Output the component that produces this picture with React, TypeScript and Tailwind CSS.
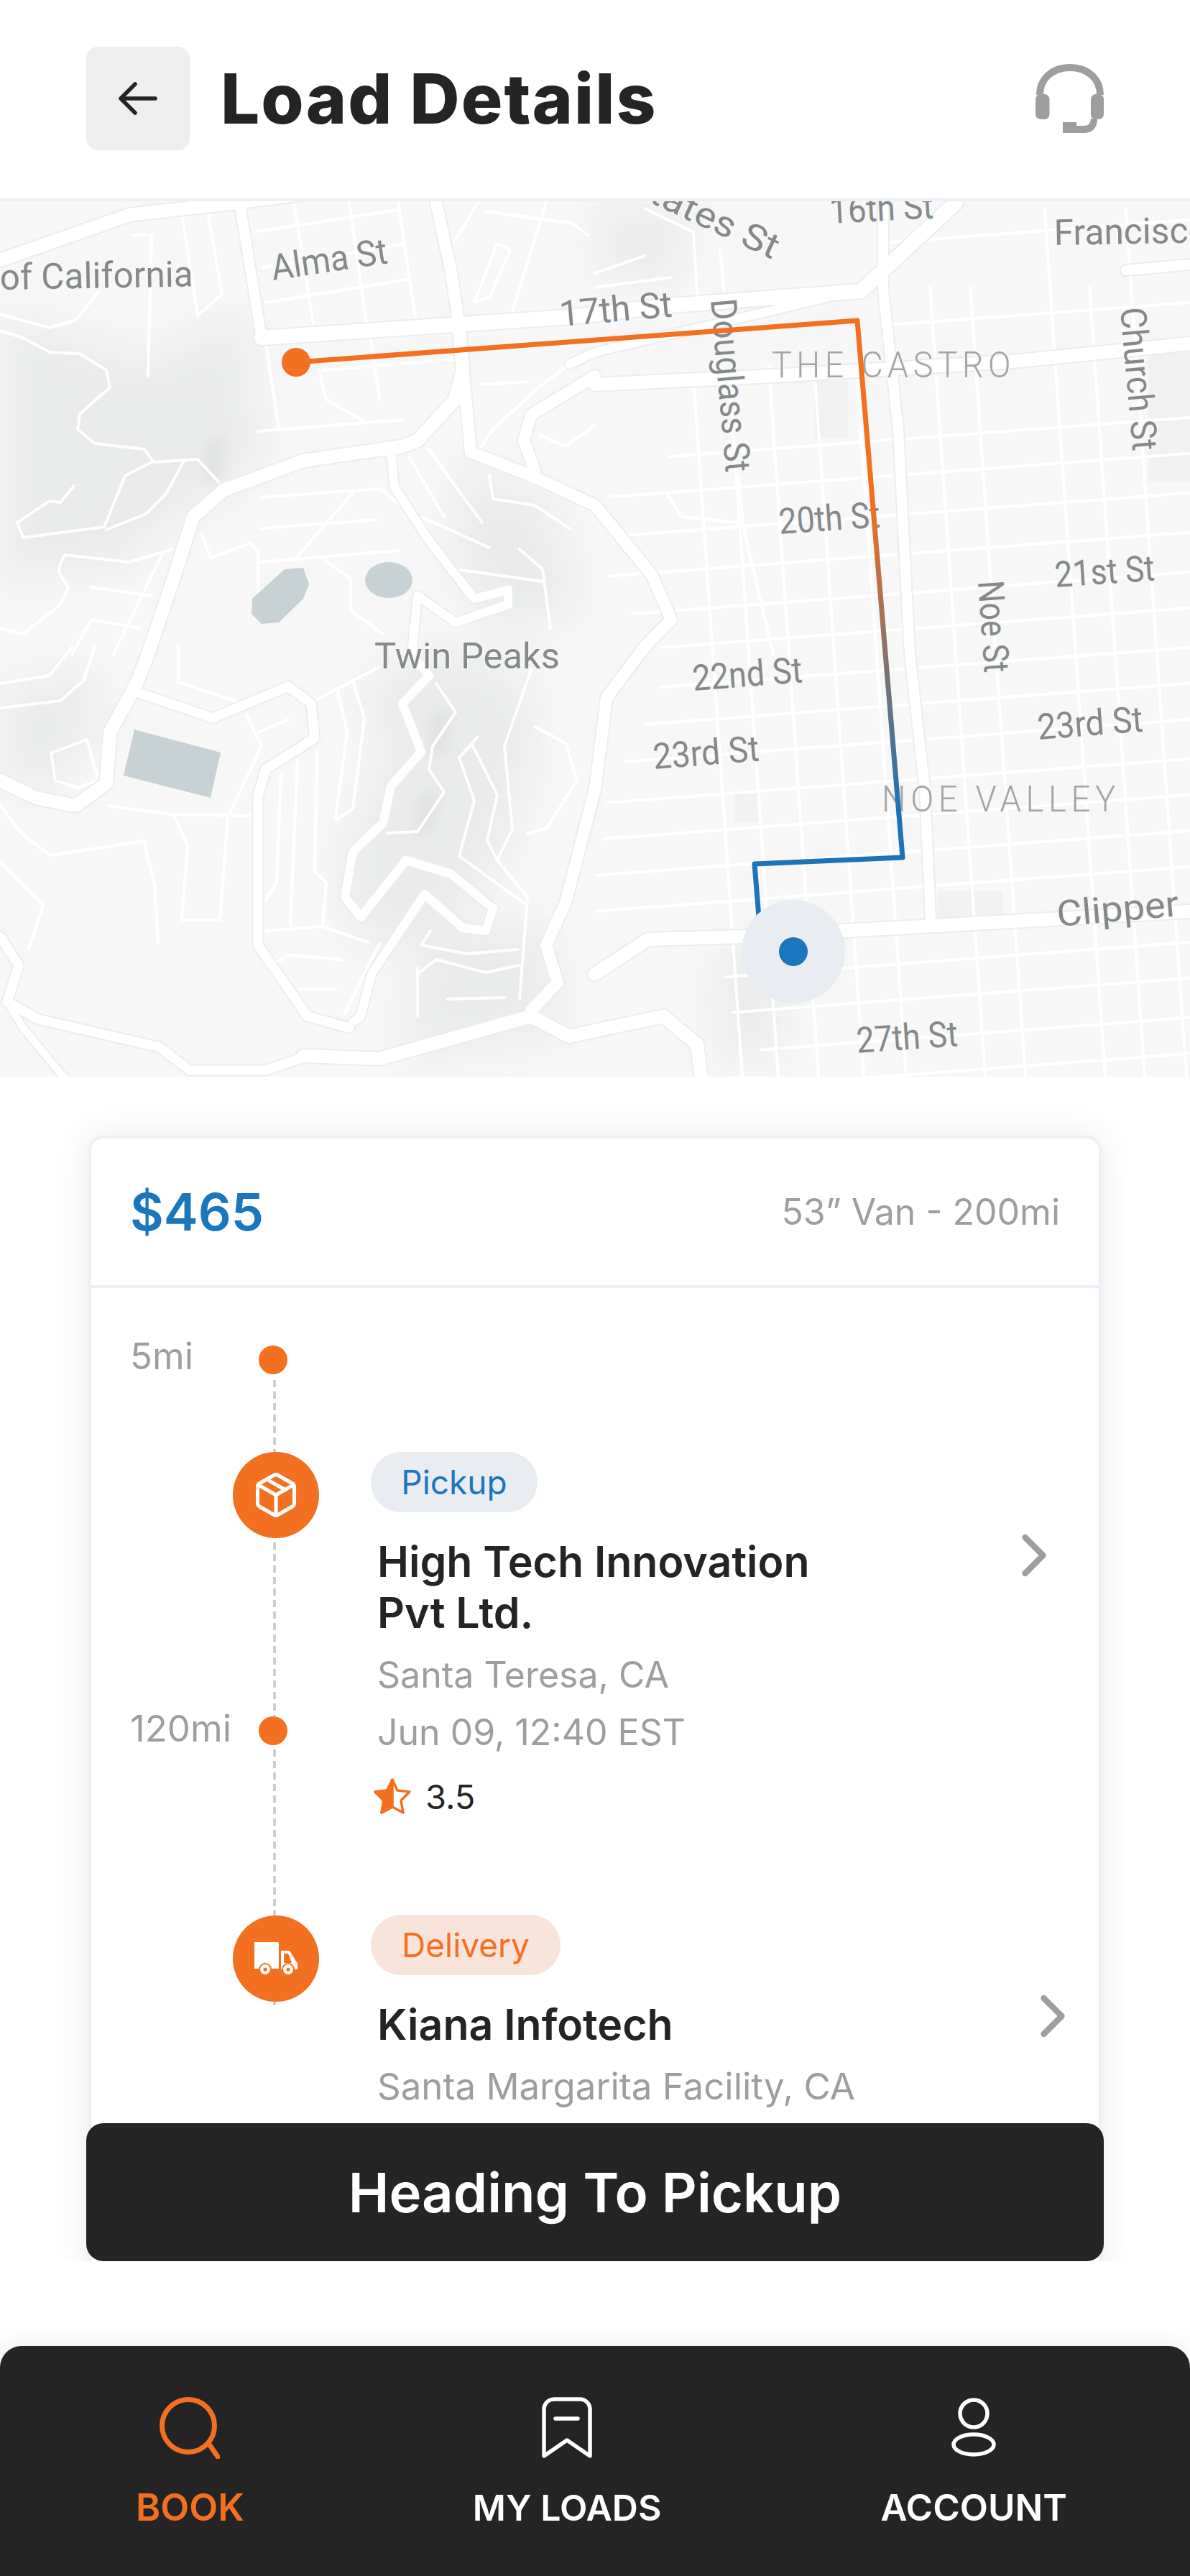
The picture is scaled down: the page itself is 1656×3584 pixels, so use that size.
import { ChevronRight, Package } from "lucide-react";

// map data, all points are page coordinates of the 1656 wide screen
const bigRoads: [string, number][] = [
  ["0,362 180,299 327,282 420,270", 18],
  ["333,280 364,470", 14],
  ["364,470 628,452 792,441 934,425 1198,405 1330,282", 20],
  ["828,535 1076,523 1409,503 1656,478", 18],
  ["792,507 828,490 1071,433 1187,405", 12],
  ["607,282 628,380 639,454 655,629 739,662 828,703 907,800 934,862 897,900 844,971 828,1098 787,1256 760,1315 776,1367 739,1406", 16],
  ["828,523 739,577 729,613 744,654", 16],
  ["639,454 644,515 633,556 581,613 560,621 422,641 311,682 269,719 243,800 206,910 190,951 153,1019 148,1090 105,1121 50,1110 0,1086", 18],
  ["544,629 549,678 597,752 628,792 660,833 707,821 707,841 634,866 581,829 573,910 597,940 560,979 586,1046 544,1094 533,1145 491,1185 480,1248 502,1276 565,1197 628,1216 686,1264 676,1295 644,1291 591,1244 517,1355 502,1414 491,1422", 12],
  ["190,963 296,999 401,955 433,979 438,1027 370,1070 359,1106 359,1315 428,1414 486,1430", 13],
  ["422,1469 528,1473 739,1414 792,1442 828,1434 923,1414 970,1453 976,1500", 18],
  ["0,1303 26,1343 10,1394 53,1418 222,1457 264,1489 370,1489 428,1469", 13],
  ["10,1394 32,1430 90,1500", 10],
  ["828,1355 902,1307 1034,1303 1656,1268", 18],
  ["1229,282 1229,405 1250,597 1266,910 1287,1098 1295,1280", 14],
  ["1567,376 1656,368", 14],
];

const thinRoads = [
  "359,322 554,292", "365,372 560,340", "370,421 570,388", "409,282 436,450", "486,282 510,450", "554,282 578,441",
  "0,437 69,456 106,445 137,405",
  "0,460 32,470 69,490 111,492 148,515 153,539 111,576 108,597 132,617 201,625 214,643 275,639 311,678",
  "211,643 174,662 145,733 32,748 24,727 69,697 84,699 103,676",
  "256,641 232,686 203,715 148,737", "211,327 206,523", "185,327 211,327", "253,297 275,439 309,409 288,290",
  "370,478 388,597", "359,600 562,584", "449,515 634,500", "444,515 454,556 507,586", "515,466 528,556",
  "364,692 528,680 552,699", "364,735 523,723", "412,776 491,686", "364,782 554,766",
  "449,778 488,805 488,850 533,882", "280,743 293,776 348,756 359,766 359,841",
  "84,784 90,772 180,782 240,764", "84,784 82,797 95,817 84,841 32,882 0,874", "127,817 211,829", "227,768 158,910",
  "127,862 195,874", "127,862 100,910", "0,951 69,940 100,900", "0,985 84,975 116,947 132,900", "248,900 248,949 327,975",
  "150,1121 238,1133 348,1135", "343,995 364,1038 317,1137 306,1280 253,1280 261,1177 243,1137", "359,1019 401,1001",
  "71,1048 121,1029 137,1086 108,1096 77,1086 71,1048", "391,1078 385,1228 370,1252", "414,1058 404,1287",
  "441,1046 438,1212 454,1228 449,1289", "470,963 483,1019 467,1137", "491,947 507,999 491,1125 467,1141",
  "441,973 528,928", "370,1295 449,1289 512,1311", "385,1339 401,1329 475,1335", "417,1376 467,1376",
  "607,951 634,991 602,1038 597,1070 618,1102 581,1157 539,1159", "665,1025 639,1054 660,1114 639,1191 734,1260",
  "657,1036 692,1106 678,1169 692,1197 734,1248 723,1390", "739,932 702,1038 713,1153 692,1197",
  "744,1011 787,1034 803,1086 760,1153 734,1160", "599,1295 586,1315 649,1327 721,1321",
  "581,1355 607,1335 676,1353 723,1343", "581,1347 581,1414", "623,1390 702,1388", "528,1313 480,1410",
  "671,535 734,531", "665,629 686,597 750,539 792,507", "597,625 623,662 671,727", "570,637 618,719",
  "681,662 686,694 744,703 792,735", "586,719 681,762", "723,764 755,792 766,874", "634,792 755,809",
  "623,352 665,282", "676,294 797,311 818,327", "760,282 713,433", "660,421 692,339 710,348 681,413 660,421",
  "750,605 787,621 828,592", "897,290 965,323 970,409", "1002,348 1008,409", "897,356 828,380", "934,386 828,400",
  "928,686 949,719 1028,727", "1028,662 1034,731 1050,800 1076,910", "0,1200 60,1260 40,1320", "0,1120 30,1160 70,1190 200,1170 215,1230 220,1310",
];

// street grid of the right half, y at x=1200 and where the street starts
const gridStreets: [number, number][] = [
  [340, 1240], [455, 1240], [615, 930], [665, 850], [720, 850], [775, 850], [830, 880], [880, 920], [935, 920], [985, 900],
  [1035, 870], [1090, 845], [1140, 840], [1190, 830], [1240, 830], [1345, 1010], [1395, 1020], [1450, 1060], [1500, 1020],
];
const gridAvenues: [number, number][] = [
  [970, 540], [1020, 540], [1076, 510], [1139, 510], [1198, 510], [1308, 400], [1364, 400], [1475, 290], [1530, 400], [1588, 290],
];

const labels: { t: string; x: number; y: number; len: number; a: number; soft?: boolean }[] = [
  { t: "of California", x: 0, y: 403, len: 269, a: -1 },
  { t: "Alma St", x: 380, y: 390, len: 163, a: -8.5 },
  { t: "17th St", x: 780, y: 454, len: 157, a: -5 },
  { t: "States St", x: 871, y: 266, len: 225, a: 25 },
  { t: "16th St", x: 1155, y: 311, len: 145, a: -3 },
  { t: "Francisco", x: 1467, y: 341, len: 215, a: -1 },
  { t: "Douglass St", x: 989, y: 417, len: 242, a: 85 },
  { t: "THE CASTRO", x: 1074, y: 525, len: 339, a: 0, soft: true },
  { t: "Church St", x: 1559, y: 429, len: 200, a: 85 },
  { t: "20th St", x: 1085, y: 743, len: 141, a: -4 },
  { t: "21st St", x: 1469, y: 817, len: 139, a: -4 },
  { t: "Noe St", x: 1361, y: 809, len: 128, a: 86 },
  { t: "Twin Peaks", x: 521, y: 930, len: 258, a: 0 },
  { t: "22nd St", x: 965, y: 961, len: 153, a: -4.5 },
  { t: "23rd St", x: 910, y: 1070, len: 148, a: -4.5 },
  { t: "23rd St", x: 1445, y: 1029, len: 147, a: -4.5 },
  { t: "NOE VALLEY", x: 1227, y: 1129, len: 332, a: 0, soft: true },
  { t: "Clipper", x: 1472, y: 1289, len: 170, a: -5 },
  { t: "27th St", x: 1193, y: 1465, len: 141, a: -4 },
];

const MapView = () => (
  <svg viewBox="0 280 1656 1218" className="block h-[1218px] w-full bg-[#f6f7f6]">
    <defs>
      <filter id="soft" x="-30%" y="-30%" width="160%" height="160%">
        <feGaussianBlur stdDeviation="28" />
      </filter>
      <filter id="softer" x="-30%" y="-30%" width="160%" height="160%">
        <feGaussianBlur stdDeviation="9" />
      </filter>
      <linearGradient id="route" gradientUnits="userSpaceOnUse" x1="0" y1="700" x2="0" y2="1130">
        <stop offset="0" stopColor="#f37021" />
        <stop offset="1" stopColor="#1d73b6" />
      </linearGradient>
    </defs>

    {/* hills */}
    <g filter="url(#soft)" fill="#eaeceb">
      <polygon points="0,440 130,470 200,500 340,430 370,640 320,680 250,720 170,790 0,810" />
      <polygon points="500,950 600,900 730,930 750,1040 690,1220 610,1300 500,1320 470,1200 530,1050" />
      <polygon points="1000,1320 1085,1320 1085,1470 1000,1470" />
      <polygon points="0,960 120,930 150,1000 70,1100 0,1090" />
      <polygon points="640,640 770,700 810,840 700,890 630,790" />
      <polygon points="830,290 970,285 940,390 840,395" />
      <polygon points="580,1300 760,1280 780,1440 560,1470" />
    </g>
    <g filter="url(#softer)" fill="#e0e2e1">
      <polygon points="285,620 312,605 308,665 285,675" />
      <polygon points="598,1000 628,982 622,1045 598,1055" />
      <polygon points="583,1108 612,1098 602,1155 578,1165" />
    </g>
    <g fill="#f0f1f0">
      <rect x="1133" y="530" width="47" height="80" />
      <rect x="1598" y="480" width="58" height="190" />
      <rect x="1022" y="1100" width="36" height="44" />
      <rect x="1305" y="1240" width="90" height="40" />
    </g>

    {/* streets */}
    <g fill="none" strokeLinecap="round" strokeLinejoin="round">
      <g stroke="#ffffff" strokeWidth="4">
        {thinRoads.map((p, i) => (
          <polyline key={i} points={p} />
        ))}
        {gridStreets.map(([y, start], i) => (
          <line key={i} x1={start} y1={y - 0.075 * (start - 1200)} x2={1656} y2={y - 0.075 * 456} />
        ))}
        {gridAvenues.map(([x, start], i) => (
          <line key={i} x1={x + 0.07 * (start - 597)} y1={start} x2={x + 0.07 * (1498 - 597)} y2={1498} />
        ))}
      </g>
      <g stroke="#ebeeee">
        {bigRoads.map(([p, w], i) => (
          <polyline key={i} points={p} strokeWidth={w + 4} />
        ))}
      </g>
      <g stroke="#ffffff">
        {bigRoads.map(([p, w], i) => (
          <polyline key={i} points={p} strokeWidth={w} />
        ))}
      </g>
    </g>

    {/* water */}
    <g fill="#c8d2d4">
      <polygon points="351,833 396,792 422,790 430,813 422,833 388,866 364,868 350,854" />
      <ellipse cx="541" cy="807" rx="33" ry="25" />
      <polygon points="187,1015 307,1047 293,1110 172,1079" />
    </g>

    {/* labels */}
    <g className="font-['Roboto',sans-serif]" fontSize="50" stroke="#f6f7f6" strokeWidth="3" paintOrder="stroke">
      {labels.map((l, i) => (
        <text
          key={i}
          x={l.x}
          y={l.y}
          textLength={l.len}
          lengthAdjust="spacingAndGlyphs"
          letterSpacing={l.soft ? 7 : 0}
          fontWeight={l.soft ? 300 : 400}
          fill={l.soft ? "#a2a5a5" : "#85898a"}
          transform={`rotate(${l.a} ${l.x} ${l.y})`}
        >
          {l.t}
        </text>
      ))}
    </g>

    {/* route */}
    <polyline
      points="412,504 1193,446 1256,1193 1050,1202 1058,1300"
      fill="none"
      stroke="url(#route)"
      strokeWidth="7"
      strokeLinejoin="round"
    />
    <circle cx="412" cy="504" r="20" fill="#f37021" />
    <circle cx="1104" cy="1324" r="72" fill="#e9edf2" />
    <circle cx="1104" cy="1324" r="20" fill="#1a76bd" />
  </svg>
);

const Dashes = ({ h }: { h: string }) => (
  <div className={`${h} mr-[4px] w-[4px] bg-[repeating-linear-gradient(to_bottom,#cfcfcf_0,#cfcfcf_10px,transparent_10px,transparent_16px)]`} />
);

const HalfStar = () => (
  <svg viewBox="0 0 52 50" className="h-[50px] w-[52px]">
    <path
      d="M26 2 L33 17 L50 19 L38 31 L41 48 L26 40 L11 48 L14 31 L2 19 L19 17 Z"
      fill="none"
      stroke="#f37021"
      strokeWidth="3.500"
      strokeLinejoin="round"
    />
    <path d="M26 2 L19 17 L2 19 L14 31 L11 48 L26 40 Z" fill="#f37021" stroke="#f37021" strokeWidth="3.500" strokeLinejoin="round" />
  </svg>
);

const TruckIcon = () => (
  <svg viewBox="0 0 60 47" className="h-[47px] w-[60px]">
    <path d="M0 0 H32 Q34 0 34 2 V37 H0 Z" fill="#fff" />
    <path d="M37 12 H49 L60 30 V38 H37 Z" fill="#fff" />
    <path d="M41 16 H47 L52 29 H41 Z" fill="#f37021" />
    <circle cx="15" cy="38" r="8" fill="#fff" stroke="#f37021" strokeWidth="2" />
    <circle cx="15" cy="38" r="2.500" fill="#f37021" />
    <circle cx="47" cy="38" r="8" fill="#fff" stroke="#f37021" strokeWidth="2" />
    <circle cx="47" cy="38" r="2.500" fill="#f37021" />
  </svg>
);

export default function App() {
  return (
    <div className="flex h-[3584px] w-[1656px] flex-col bg-white font-['Inter',sans-serif] text-[#242424]">
      {/* header */}
      <header className="flex h-[280px] shrink-0 items-center justify-between border-b-4 border-[#eef0f8] pb-[2px] pl-[120px] pr-[120px]">
        <div className="flex items-center gap-[43px]">
          <button className="flex h-[144px] w-[144px] items-center justify-center rounded-[16px] bg-[#eeeeee]">
            <svg viewBox="0 0 54 46" className="h-[46px] w-[54px]" fill="none" stroke="#242424" strokeWidth="5.500" strokeLinecap="round" strokeLinejoin="round">
              <path d="M51 23 H4 M23 3 L3 23 L23 43" />
            </svg>
          </button>
          <h1 className="text-[96px] font-extrabold leading-none tracking-[2px]">Load Details</h1>
        </div>
        <svg viewBox="15 12 95 97" className="h-[97px] w-[95px]" fill="#9e9e9e">
          <path d="M21 55 C21 32 39 17 63 17 C87 17 105 32 105 55" fill="none" stroke="#9e9e9e" strokeWidth="10" />
          <rect x="15" y="54" width="19.500" height="35" rx="7" />
          <rect x="92" y="54" width="18" height="35" rx="7" />
          <path d="M53 93 H72 V98 H82 Q92 98 92 88 H101 Q101 108 82 108 H53 Z" />
        </svg>
      </header>

      <MapView />

      {/* load card, cut off at the bottom like a scroll area */}
      <div className="relative h-[1648px] shrink-0 overflow-hidden px-[123px] pt-[82px]">
        <div className="h-[1600px] rounded-t-[20px] border-4 border-[#eef0f8] bg-white shadow-[0_0_50px_rgba(0,0,0,0.09)]">
          <div className="flex h-[208px] items-center justify-between border-b-4 border-[#eef0f8] pl-[54px] pr-[54px]">
            <span className="text-[72px] font-semibold text-[#1a76bd]">$465</span>
            <span className="text-[50px] text-[#9e9e9e]">53” Van - 200mi</span>
          </div>

          <div className="flex pt-[80px]">
            {/* timeline */}
            <div className="flex w-[317px] shrink-0 flex-col pl-[56px]">
              <div className="flex h-[40px] items-center">
                <span className="-ml-[2px] w-[141px] -translate-y-[6px] text-[51px] leading-none text-[#9e9e9e]">5mi</span>
                <div className="ml-[2px] flex w-[120px] justify-center">
                  <div className="mr-[8px] h-[40px] w-[40px] rounded-full bg-[#f37021]" />
                </div>
              </div>
              <div className="ml-[141px] flex w-[120px] flex-col items-center">
                <div className="h-[8px]" />
                <Dashes h="h-[100px]" />
                <div className="flex h-[120px] w-[120px] items-center justify-center rounded-full bg-[#f37021]">
                  <Package size={68} strokeWidth={1.8} color="#ffffff" />
                </div>
                <div className="h-[6px]" />
                <Dashes h="h-[242px]" />
              </div>
              <div className="flex h-[40px] items-center">
                <span className="-ml-[2px] w-[141px] -translate-y-[4px] whitespace-nowrap text-[51px] leading-none text-[#9e9e9e]">120mi</span>
                <div className="ml-[2px] flex w-[120px] justify-center">
                  <div className="mr-[8px] h-[40px] w-[40px] rounded-full bg-[#f37021]" />
                </div>
              </div>
              <div className="ml-[141px] flex w-[120px] flex-col items-center">
                <div className="h-[6px]" />
                <Dashes h="h-[231px]" />
                <div className="flex h-[120px] w-[120px] items-center justify-center rounded-full bg-[#f37021]">
                  <TruckIcon />
                </div>
                <Dashes h="h-[5px]" />
              </div>
            </div>

            {/* stops */}
            <div className="ml-[72px] flex-1 pt-[148px]">
              <div className="flex items-start justify-between pr-[40px]">
                <div>
                  <span className="flex h-[84px] w-[232px] items-center justify-center rounded-full bg-[#e9edf2] text-[46px] text-[#1a76bd]">Pickup</span>
                  <h2 className="ml-[9px] mt-[33px] w-[680px] text-[59px] font-semibold leading-[71px]">High Tech Innovation Pvt Ltd.</h2>
                  <p className="ml-[9px] mt-[11px] text-[50px] leading-[80px] text-[#9e9e9e]">Santa Teresa, CA</p>
                  <p className="ml-[9px] text-[50px] leading-[80px] text-[#9e9e9e]">Jun 09, 12:40 EST</p>
                  <div className="ml-[4px] mt-[24px] flex h-[50px] items-center gap-[20px]">
                    <HalfStar />
                    <span className="text-[47px] leading-none">3.5</span>
                  </div>
                </div>
                <ChevronRight size={100} strokeWidth={2} color="#9e9e9e" className="mt-[94px]" />
              </div>
              <div className="mt-[140px] flex items-start justify-between pr-[14px]">
                <div>
                  <span className="flex h-[84px] w-[264px] items-center justify-center rounded-full bg-[#f8e4da] text-[46px] text-[#f37021]">Delivery</span>
                  <h2 className="ml-[9px] mt-[33px] text-[59px] font-semibold leading-[71px]">Kiana Infotech</h2>
                  <p className="ml-[9px] mt-[11px] text-[51px] leading-[80px] text-[#9e9e9e]">Santa Margarita Facility, CA</p>
                </div>
                <ChevronRight size={100} strokeWidth={2} color="#9e9e9e" className="mt-[91px]" />
              </div>
            </div>
          </div>
        </div>

        <button className="absolute bottom-0 left-[120px] right-[120px] h-[192px] rounded-[24px] bg-[#242424] text-[76px] font-semibold text-white">
          Heading To Pickup
        </button>
      </div>

      <div className="flex-1" />

      {/* bottom nav */}
      <nav className="flex h-[320px] shrink-0 rounded-t-[30px] bg-[#242424] pl-[189px] pt-[71px] shadow-[0_-6px_30px_rgba(0,0,0,0.07)]">
        <div className="flex flex-col items-center">
          <svg viewBox="0 0 84 86" className="h-[86px] w-[84px]" fill="none" stroke="#f37021" strokeWidth="7" strokeLinecap="round">
            <circle cx="40" cy="40" r="36.500" />
            <path d="M70 67 L81 83" />
          </svg>
          <span className="mt-[38px] text-[52px] font-semibold leading-[60px] text-[#f37021]">BOOK</span>
        </div>
        <div className="ml-[318px] flex flex-col items-center">
          <svg viewBox="0 0 70 86" className="h-[86px] w-[70px]" fill="none" stroke="#ffffff" strokeWidth="5.500" strokeLinecap="round" strokeLinejoin="round">
            <path d="M3 82 V17 A14 14 0 0 1 17 3 H53 A14 14 0 0 1 67 17 V82 L35 60 Z" />
            <path d="M19 30 H50" />
          </svg>
          <span className="mt-[38px] text-[50px] font-semibold leading-[60px] text-white">MY LOADS</span>
        </div>
        <div className="ml-[305px] flex flex-col items-center">
          <svg viewBox="0 0 64 86" className="h-[86px] w-[64px]" fill="none" stroke="#ffffff" strokeWidth="5.500">
            <circle cx="32" cy="23" r="19" />
            <ellipse cx="32" cy="66" rx="28" ry="14" />
          </svg>
          <span className="mt-[38px] text-[51px] font-semibold leading-[60px] text-white">ACCOUNT</span>
        </div>
      </nav>
    </div>
  );
}
